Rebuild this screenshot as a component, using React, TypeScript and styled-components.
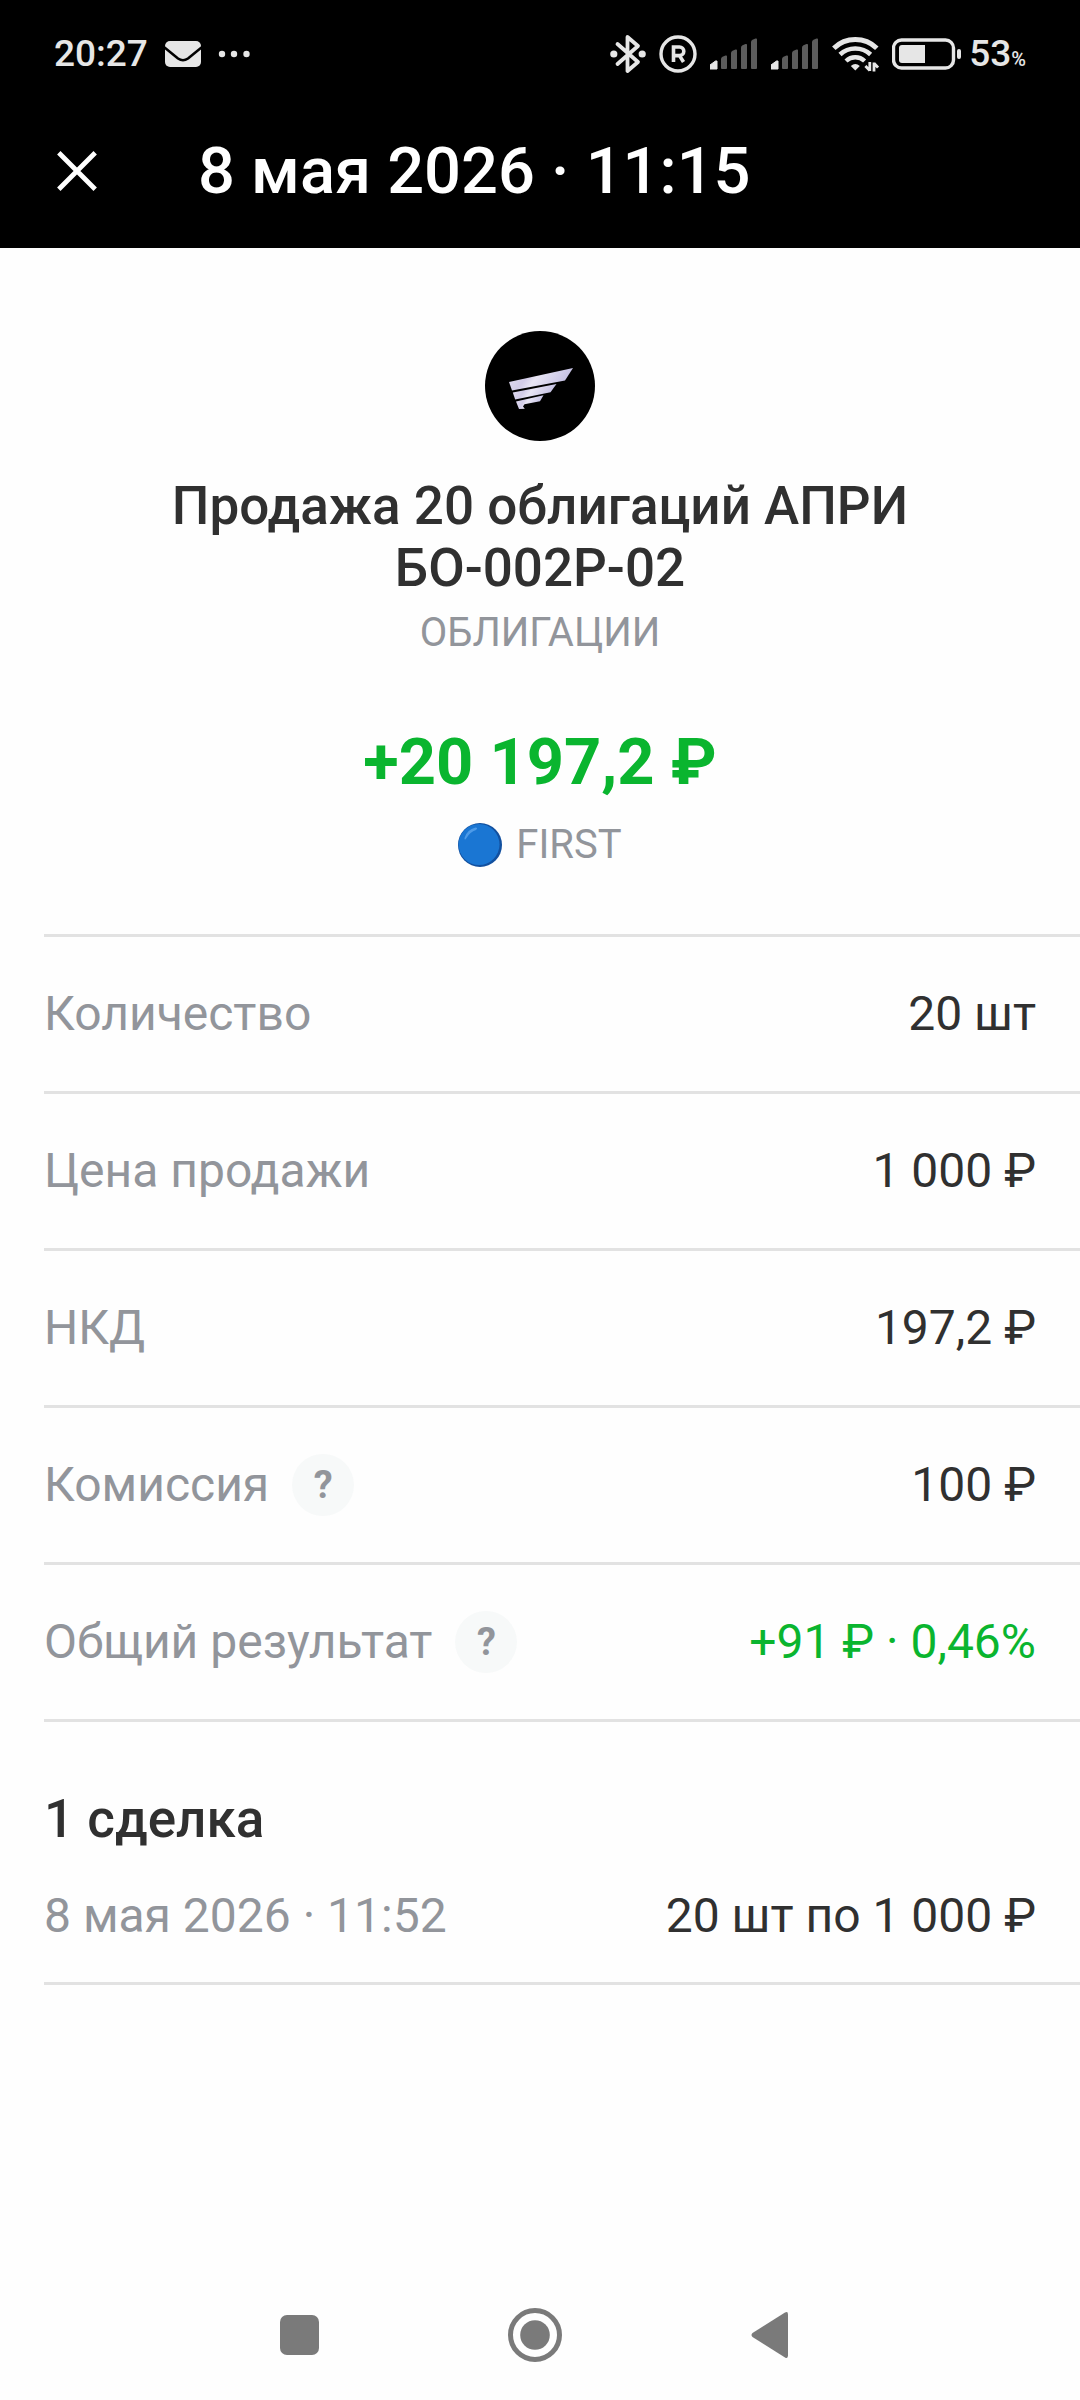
import React from "react";
import styled, { createGlobalStyle } from "styled-components";

const GlobalStyle = createGlobalStyle`
  *, *::before, *::after { box-sizing: border-box; }
  body {
    margin: 0;
    background: #fefefe;
    color: #303030;
    font-family: Roboto, "Noto Sans", sans-serif;
    font-size: 48px;
    line-height: 56px;
  }
  h1, h2, p, dl, dt, dd { margin: 0; font-weight: inherit; }
  button { border: 0; padding: 0; font: inherit; cursor: pointer; }
  svg { display: block; flex: none; }
`;

const Screen = styled.div`
  display: flex;
  flex-direction: column;
  min-height: 100vh;
`;

const TopBar = styled.header`
  background: #000;
  color: #fff;
  padding-bottom: 30px;
`;

const StatusBar = styled.div`
  display: flex;
  align-items: center;
  justify-content: space-between;
  height: 108px;
  padding: 0 54px;
  color: #e6e6e6;
  font-size: 37px;
  font-weight: 500;
  line-height: 44px;
`;

const StatusGroup = styled.div<{ $gap: number }>`
  display: flex;
  align-items: center;
  gap: ${(p) => p.$gap}px;
`;

const Charge = styled.span`
  display: flex;
  align-items: baseline;
`;

const Percent = styled.span`
  font-size: 20px;
  line-height: 24px;
`;

const TitleRow = styled.div`
  display: flex;
  align-items: center;
  gap: 98px;
  height: 110px;
  padding: 16px 54px 0;
`;

const CloseButton = styled.button`
  background: none;
  color: inherit;
  display: flex;
  align-items: center;
  justify-content: center;
  width: 46px;
  height: 66px;
`;

const Title = styled.h1`
  && { font-weight: 500; }
  font-size: 65px;
  line-height: 78px;
`;

const Content = styled.main`
  flex: 1;
`;

const Summary = styled.section`
  display: flex;
  flex-direction: column;
  align-items: center;
  padding: 83px 132px 65px;
  text-align: center;
`;

const Heading = styled.h2`
  && { font-weight: 500; }
  font-size: 53px;
  line-height: 62px;
`;

const SummaryHeading = styled(Heading)`
  margin: 34px 0 10px;
`;

const Caption = styled.p`
  display: flex;
  align-items: center;
  gap: 14px;
  color: #92959b;
  font-size: 40px;
  line-height: 48px;
`;

const Amount = styled.p`
  && { font-weight: 700; }
  margin: 66px 0 20px;
  color: #0ab52f;
  font-size: 65px;
  line-height: 78px;
`;

const Details = styled.dl`
  margin-left: 44px;
  border-top: 3px solid #e2e2e2;
`;

const Row = styled.div`
  display: flex;
  align-items: center;
  justify-content: space-between;
  min-height: 157px;
  padding-right: 44px;
  border-bottom: 3px solid #e2e2e2;
`;

const Label = styled.dt`
  display: flex;
  align-items: center;
  gap: 23px;
  color: #92959b;
`;

const Value = styled.dd<{ $gain?: boolean }>`
  color: ${(p) => (p.$gain ? "#0ab52f" : "#303030")};
`;

const HelpButton = styled.button`
  width: 62px;
  height: 62px;
  border-radius: 50%;
  background: #f7f9f9;
  color: #92959b;
  && { font-size: 38px; font-weight: 700; line-height: 44px; }
`;

const Deals = styled.section`
  margin-left: 44px;
  padding-top: 66px;
  border-bottom: 3px solid #e2e2e2;
`;

const Deal = styled.div`
  display: flex;
  justify-content: space-between;
  padding: 38px 44px 38px 0;
`;

const DealDate = styled.time`
  color: #92959b;
`;

const NavBar = styled.nav`
  display: flex;
  align-items: center;
  justify-content: center;
  gap: 140px;
  height: 130px;
  padding-right: 10px;
`;

const NavButton = styled.button`
  display: flex;
  align-items: center;
  justify-content: center;
  width: 96px;
  height: 96px;
  background: none;
  color: #7a7a7a;
`;

const MailIcon = () => (
  <svg width="36" height="26" viewBox="0 0 36 26" aria-hidden="true">
    <rect width="36" height="26" rx="5" fill="currentColor" />
    <path d="M-1 6 L13 17.5 Q18 21 23 17.5 L37 6" fill="none" stroke="#000" strokeWidth="2.6" />
  </svg>
);

const MoreIcon = () => (
  <svg width="32" height="8" viewBox="0 0 32 8" fill="currentColor" aria-hidden="true">
    <circle cx="4" cy="4" r="3.2" />
    <circle cx="16" cy="4" r="3.2" />
    <circle cx="28.5" cy="4" r="3.2" />
  </svg>
);

const BluetoothIcon = () => (
  <svg width="36" height="40" viewBox="0 0 36 40" aria-hidden="true">
    <path
      d="M7.5 10 L28 28 L17.5 37 V3 L28 12 L7.5 30"
      fill="none"
      stroke="currentColor"
      strokeWidth="3.8"
      strokeLinecap="round"
      strokeLinejoin="round"
    />
    <circle cx="3.8" cy="20" r="3.6" fill="currentColor" />
    <circle cx="32.2" cy="20" r="3.6" fill="currentColor" />
  </svg>
);

const RegisteredIcon = () => (
  <svg width="38" height="38" viewBox="0 0 38 38" fill="none" stroke="currentColor" aria-hidden="true">
    <circle cx="19" cy="19" r="17" strokeWidth="3.4" />
    <path d="M14.5 27 V12 H20.5 A4.3 4.3 0 0 1 20.5 20.6 H14.5 M20.5 20.6 L24.5 27" strokeWidth="3.6" />
  </svg>
);

const SignalIcon = () => (
  <svg width="48" height="32" viewBox="0 0 48 32" aria-hidden="true">
    <path d="M0 31 V27 L5.5 23 H7 V31 Z" fill="currentColor" stroke="currentColor" strokeLinejoin="round" />
    <g fill="#5c5c5c">
      <path d="M11 30 V21 Q11 19.5 12.5 18.8 L15.5 17.5 Q17 17 17 18.5 V30 Q17 31 16 31 H12 Q11 31 11 30Z" />
      <path d="M21 30 V15 Q21 13.5 22.5 12.8 L25.5 11.5 Q27 11 27 12.5 V30 Q27 31 26 31 H22 Q21 31 21 30Z" />
      <path d="M31 30 V9.5 Q31 8 32.5 7.3 L35.5 6 Q37 5.5 37 7 V30 Q37 31 36 31 H32 Q31 31 31 30Z" />
      <path d="M41 30 V4 Q41 2.5 42.5 1.8 L45.5 .5 Q47 0 47 1.5 V30 Q47 31 46 31 H42 Q41 31 41 30Z" />
    </g>
  </svg>
);

const WifiIcon = () => (
  <svg width="47" height="36" viewBox="0 0 47 36" fill="none" stroke="currentColor" aria-hidden="true">
    <path d="M1.8 12.2 A31 31 0 0 1 44.8 12.2" strokeWidth="5" />
    <path d="M8 18.5 A22.5 22.5 0 0 1 38.6 18.5" strokeWidth="4.6" />
    <path d="M14 25 A13.5 13.5 0 0 1 32.6 25" strokeWidth="4.4" />
    <path d="M18.8 30 Q23.3 25.8 27.8 30 L23.3 34.5Z" fill="currentColor" stroke="none" />
    <path d="M37.8 26 V35 M37.8 34.4 L33.4 30 M42 35.5 V26.5 M42 27.2 L46 31.6" strokeWidth="2.8" />
  </svg>
);

const BatteryIcon = () => (
  <svg width="69" height="32" viewBox="0 0 69 32" aria-hidden="true">
    <rect x="1.5" y="2" width="60" height="28" rx="8" fill="none" stroke="currentColor" strokeWidth="3.4" />
    <path d="M10 7 H33 V25 H10 Q7 25 7 22 V10 Q7 7 10 7Z" fill="currentColor" />
    <rect x="65" y="11" width="4" height="10" rx="2" fill="currentColor" />
  </svg>
);

const CloseIcon = () => (
  <svg width="40" height="40" viewBox="0 0 40 40" aria-hidden="true">
    <path d="M1.8 1.8 L38.2 38.2 M38.2 1.8 L1.8 38.2" stroke="currentColor" strokeWidth="4.8" />
  </svg>
);

const IssuerLogo = () => (
  <svg width="110" height="110" viewBox="0 0 110 110" role="img" aria-label="АПРИ">
    <defs>
      <linearGradient id="wing" x1="0" y1="0" x2="1" y2="0.25">
        <stop offset="0" stopColor="#e6e1f3" />
        <stop offset="0.35" stopColor="#d2cce8" />
        <stop offset="0.5" stopColor="#e9e6f5" />
        <stop offset="1" stopColor="#c3bfe3" />
      </linearGradient>
    </defs>
    <circle cx="55" cy="55" r="55" fill="#000" />
    <g fill="url(#wing)">
      <path d="M24 51 L88 37 L80 49.5 L27 59.5 Z" />
      <path d="M27.8 61.5 L71.5 53 L65.5 61.2 L30.2 68.5 Z" />
      <path d="M31 70.5 L58.5 64.2 L55 70.3 L39.5 73.2 L38 75.5 L39.8 77.8 L34 78 Z" />
    </g>
  </svg>
);

const BlueBall = () => (
  <svg width="44" height="44" viewBox="0 0 44 44" aria-hidden="true">
    <circle cx="22" cy="22" r="22" fill="#12509f" />
    <circle cx="21" cy="21.5" r="20.5" fill="#1a76d3" />
    <path d="M6.5 15 Q9 6.5 17.5 4.5 Q20.5 4.5 18 7 Q12 9 8.5 15 Q6.5 18 6.5 15Z" fill="#4e9be8" />
  </svg>
);

interface Detail {
  label: string;
  value: string;
  help?: boolean;
  gain?: boolean;
}

const details: Detail[] = [
  { label: "Количество", value: "20 шт" },
  { label: "Цена продажи", value: "1 000 ₽" },
  { label: "НКД", value: "197,2 ₽" },
  { label: "Комиссия", value: "100 ₽", help: true },
  { label: "Общий результат", value: "+91 ₽ · 0,46%", help: true, gain: true },
];

export default function App() {
  return (
    <Screen>
      <GlobalStyle />
      <TopBar>
        <StatusBar>
          <StatusGroup $gap={17}>
            <span>20:27</span>
            <MailIcon />
            <MoreIcon />
          </StatusGroup>
          <StatusGroup $gap={13}>
            <BluetoothIcon />
            <RegisteredIcon />
            <SignalIcon />
            <SignalIcon />
            <WifiIcon />
            <StatusGroup $gap={8}>
              <BatteryIcon />
              <Charge>
                53<Percent>%</Percent>
              </Charge>
            </StatusGroup>
          </StatusGroup>
        </StatusBar>
        <TitleRow>
          <CloseButton type="button" aria-label="Закрыть">
            <CloseIcon />
          </CloseButton>
          <Title>8 мая 2026 · 11:15</Title>
        </TitleRow>
      </TopBar>

      <Content>
        <Summary>
          <IssuerLogo />
          <SummaryHeading>Продажа 20 облигаций АПРИ БО-002Р-02</SummaryHeading>
          <Caption>ОБЛИГАЦИИ</Caption>
          <Amount>+20 197,2 ₽</Amount>
          <Caption>
            <BlueBall />
            FIRST
          </Caption>
        </Summary>

        <Details>
          {details.map((item) => (
            <Row key={item.label}>
              <Label>
                {item.label}
                {item.help && (
                  <HelpButton type="button" aria-label={`Подробнее: ${item.label}`}>
                    ?
                  </HelpButton>
                )}
              </Label>
              <Value $gain={item.gain}>{item.value}</Value>
            </Row>
          ))}
        </Details>

        <Deals>
          <Heading>1 сделка</Heading>
          <Deal>
            <DealDate dateTime="2026-05-08T11:52">8 мая 2026 · 11:52</DealDate>
            <span>20 шт по 1 000 ₽</span>
          </Deal>
        </Deals>
      </Content>

      <NavBar aria-label="Системная навигация">
        <NavButton type="button" aria-label="Недавние">
          <svg width="39" height="40" viewBox="0 0 39 40" fill="currentColor">
            <rect width="39" height="40" rx="7" />
          </svg>
        </NavButton>
        <NavButton type="button" aria-label="Домой">
          <svg width="54" height="54" viewBox="0 0 54 54">
            <circle cx="27" cy="27" r="24.5" fill="none" stroke="currentColor" strokeWidth="5" />
            <circle cx="27" cy="27" r="14.8" fill="currentColor" />
          </svg>
        </NavButton>
        <NavButton type="button" aria-label="Назад">
          <svg width="40" height="46" viewBox="0 0 40 46" fill="currentColor">
            <path d="M34 .6 Q37 -1 37 2.5 V43.5 Q37 47 34 45.4 L1.500 25 Q-.5 23 1.5 21Z" />
          </svg>
        </NavButton>
      </NavBar>
    </Screen>
  );
}
